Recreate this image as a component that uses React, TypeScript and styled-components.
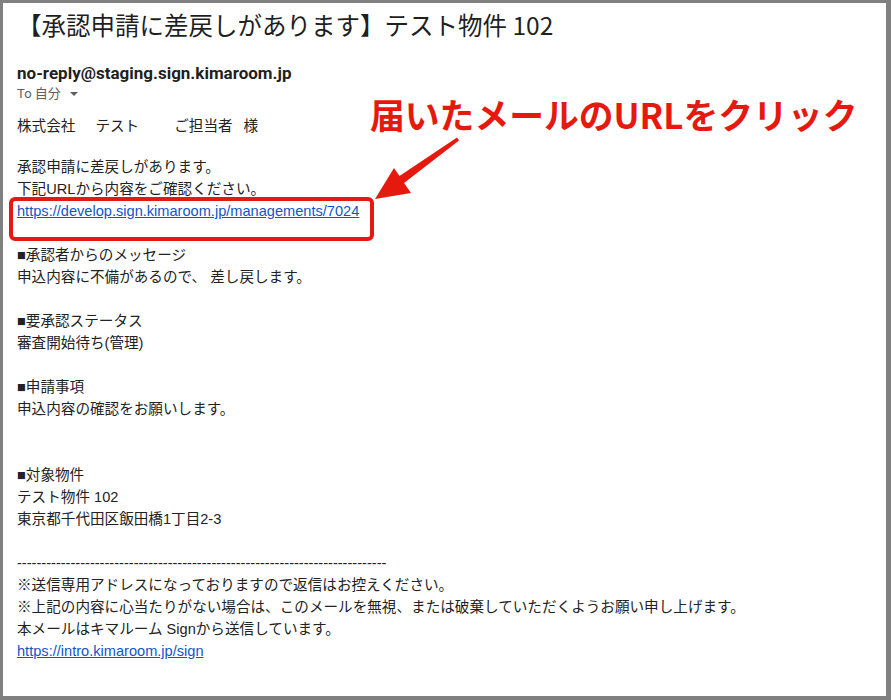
import React from 'react';
import styled, { createGlobalStyle } from 'styled-components';

const GlobalStyle = createGlobalStyle`
  html, body {
    margin: 0;
    padding: 0;
    background: #808080;
  }
`;

const Frame = styled.div`
  position: relative;
  width: 891px;
  height: 700px;
  box-sizing: border-box;
  padding: 3px 5px 4px 3px;
  background: #808080;
`;

const Sheet = styled.div`
  height: 100%;
  box-sizing: border-box;
  background: #fff;
  padding: 3px 14px 0;
  font-family: 'Liberation Sans', 'Noto Sans CJK JP', sans-serif;
  color: #222;
`;

const Subject = styled.h1`
  margin: 3px 0 0;
  font-family: 'Noto Sans CJK JP', sans-serif;
  font-weight: 400;
  font-size: 24.5px;
  line-height: 32px;
  color: #1f1f1f;
`;

const Sender = styled.div`
  margin-top: 22px;
  font-family: Roboto, 'Liberation Sans', sans-serif;
  font-weight: 700;
  font-size: 17px;
  line-height: 20px;
  color: #1f1f1f;
`;

const Recipient = styled.div`
  margin-top: 2px;
  display: flex;
  align-items: center;
  gap: 7px;
  font-family: Roboto, 'Noto Sans CJK JP', sans-serif;
  font-size: 13px;
  line-height: 18px;
  color: #5e5e5e;
`;

const Caret = styled.span`
  width: 0;
  height: 0;
  margin-left: 2px;
  border-left: 4px solid transparent;
  border-right: 4px solid transparent;
  border-top: 4px solid #5e5e5e;
`;

const Body = styled.div`
  margin-top: 12px;
  font-size: 14.6px;
  line-height: 22px;
`;

const Greeting = styled.div`
  display: flex;
  margin-bottom: 19px;
`;

const Gap = styled.span<{ $w: number }>`
  display: inline-block;
  width: ${(p) => p.$w}px;
`;

const Line = styled.div`
  min-height: 22px;
  white-space: pre;
`;

const Link = styled.a`
  color: #1155cc;
  text-decoration: underline;
`;

const Overlay = styled.div`
  position: absolute;
  inset: 0;
  pointer-events: none;
`;

const Callout = styled.div`
  position: absolute;
  left: 370px;
  top: 96px;
  font-family: 'Noto Sans CJK JP', sans-serif;
  font-weight: 700;
  font-size: 34.8px;
  line-height: 36px;
  color: #e5190e;
  white-space: nowrap;
`;

const Highlight = styled.div`
  position: absolute;
  left: 9px;
  top: 197px;
  width: 365px;
  height: 44px;
  box-sizing: border-box;
  border: 4px solid #e5190e;
  border-radius: 6px;
`;

const ArrowSvg = styled.svg`
  position: absolute;
  left: 0;
  top: 0;
`;

const Arrow = () => (
  <ArrowSvg width={891} height={700} viewBox="0 0 891 700">
    <polygon
      points="375,199 394,168 399.5,176 457,137.5 459,140.5 404,183 411,193"
      fill="#e5190e"
    />
  </ArrowSvg>
);

const lines: (string | null | { href: string })[] = [
  '承認申請に差戻しがあります。',
  '下記URLから内容をご確認ください。',
  { href: 'https://develop.sign.kimaroom.jp/managements/7024' },
  null,
  '■承認者からのメッセージ',
  '申込内容に不備があるので、 差し戻します。',
  null,
  '■要承認ステータス',
  '審査開始待ち(管理)',
  null,
  '■申請事項',
  '申込内容の確認をお願いします。',
  null,
  null,
  '■対象物件',
  'テスト物件 102',
  '東京都千代田区飯田橋1丁目2-3',
  null,
  '-'.repeat(76),
  '※送信専用アドレスになっておりますので返信はお控えください。',
  '※上記の内容に心当たりがない場合は、このメールを無視、または破棄していただくようお願い申し上げます。',
  '本メールはキマルーム Signから送信しています。',
  { href: 'https://intro.kimaroom.jp/sign' },
];

export default function App() {
  return (
    <Frame>
      <GlobalStyle />
      <Sheet>
        <Subject>【承認申請に差戻しがあります】テスト物件 102</Subject>
        <Sender>no-reply@staging.sign.kimaroom.jp</Sender>
        <Recipient>
          <span>To 自分</span>
          <Caret />
        </Recipient>
        <Body>
          <Greeting>
            <span>株式会社</span>
            <Gap $w={20} />
            <span>テスト</span>
            <Gap $w={35} />
            <span>ご担当者</span>
            <Gap $w={11} />
            <span>様</span>
          </Greeting>
          {lines.map((l, i) => (
            <Line key={i}>
              {l === null ? '' : typeof l === 'string' ? l : <Link href={l.href}>{l.href}</Link>}
            </Line>
          ))}
        </Body>
      </Sheet>
      <Overlay>
        <Callout>届いたメールのURLをクリック</Callout>
        <Highlight />
        <Arrow />
      </Overlay>
    </Frame>
  );
}
